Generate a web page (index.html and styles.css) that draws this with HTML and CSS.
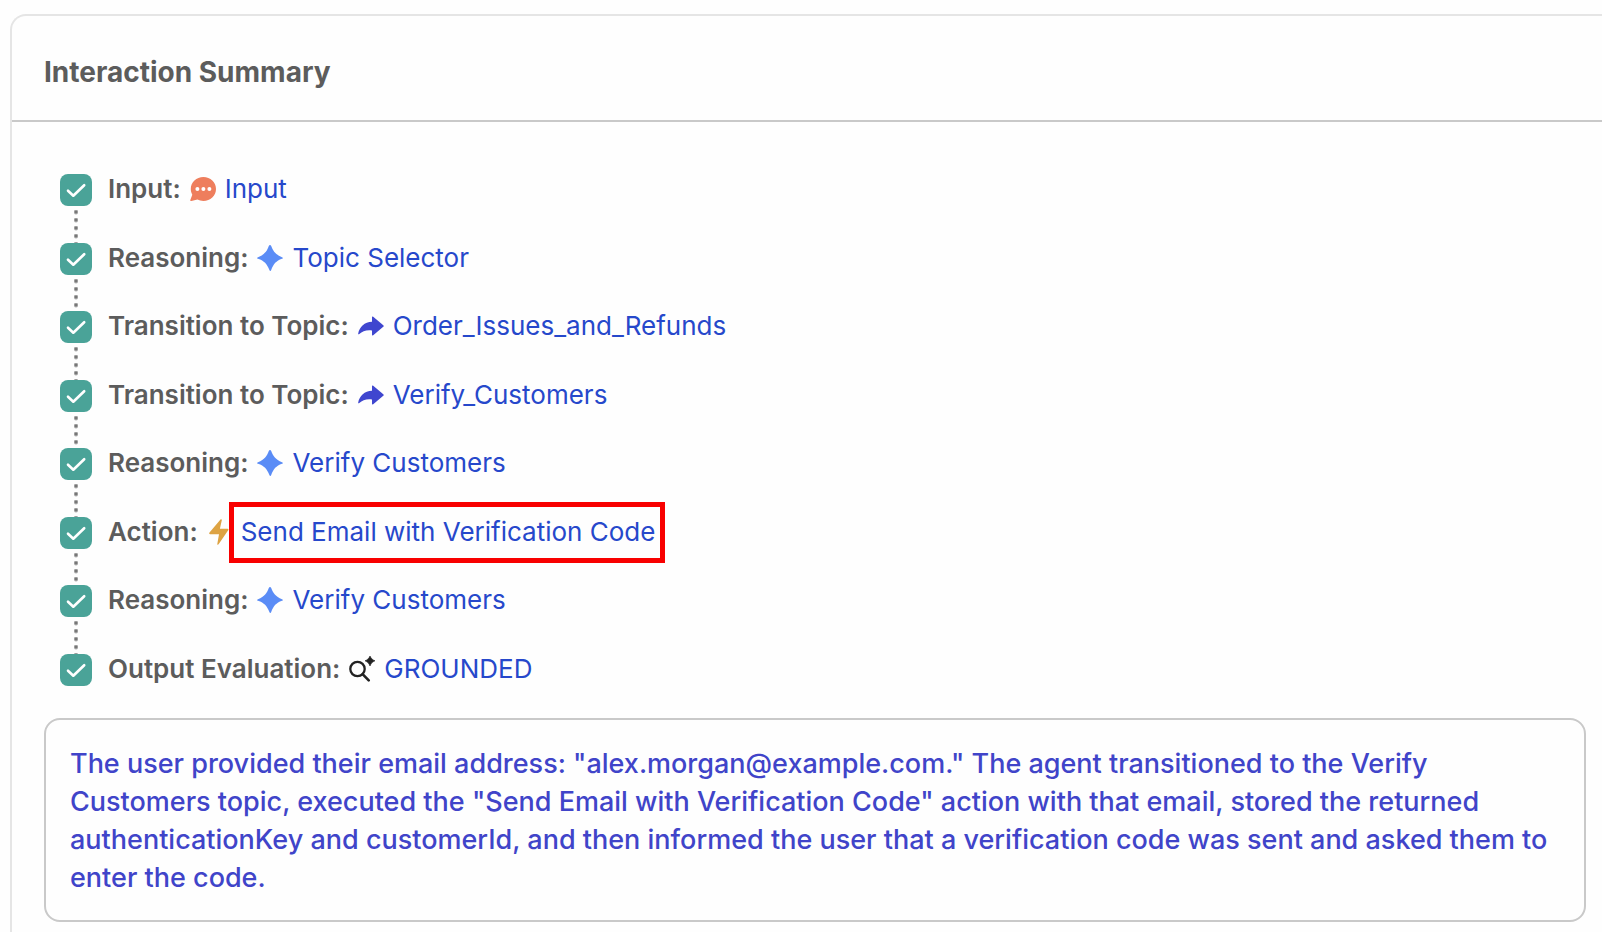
FILE: index.html
```html
<!DOCTYPE html>
<html lang="en">
<head>
    <meta charset="UTF-8">
    <meta name="viewport" content="width=device-width, initial-scale=1.0">
    <title>Interaction Summary</title>
    <link rel="stylesheet" href="styles.css">
</head>
<body>
    <!-- Shared icons -->
    <svg class="sprite" aria-hidden="true">
        <symbol id="check" viewBox="0 0 32 32">
            <rect width="32" height="32" rx="8" fill="#4aa398"/>
            <path d="M8 16.7 L13.3 21.7 L24.2 11.2" fill="none" stroke="#fff" stroke-width="2.6" stroke-linecap="round" stroke-linejoin="round"/>
        </symbol>
        <symbol id="chat" viewBox="0 0 26 26">
            <path d="M13.4 1 C20.4 1 26 6.2 26 13 C26 19.8 20.4 25 13.4 25 C11.2 25 9.2 24.5 7.4 23.6 L1.4 25 C.4 25.2 .1 24.5 .4 23.7 L2.3 18.7 C1.3 17 .8 15 .8 13 C.8 6.2 6.4 1 13.4 1 Z" fill="#ee7e5d"/>
            <circle cx="7.4" cy="13" r="2" fill="#fff"/>
            <circle cx="13.4" cy="13" r="2" fill="#fff"/>
            <circle cx="19.4" cy="13" r="2" fill="#fff"/>
        </symbol>
        <symbol id="spark" viewBox="0 0 26 26">
            <path d="M13 0 C13.5 0 13.9 .4 14.2 1 C16 6 18.6 9.6 25 12.2 C26.3 12.7 26.3 13.3 25 13.8 C19 16 16.6 18.8 14.2 25 C13.8 26.2 12.8 26.2 12.4 25 C9.8 18.8 7.4 16 1 13.8 C-.3 13.3 -.3 12.7 1 12.2 C7.6 9.6 10 6 11.8 1 C12.1 .4 12.5 0 13 0 Z" fill="#5a8cf6"/>
        </symbol>
        <symbol id="arrow" viewBox="0 0 26 26">
            <path d="M14 4.3 C14 3.5 14.6 3.3 15.2 3.8 L25.3 12.3 C25.9 12.8 25.9 13.3 25.3 13.8 L15.2 22.3 C14.6 22.8 14 22.5 14 21.8 V17.4 C8.5 16.7 4.5 18 1.3 21 C.6 21.6 0 21.3 .2 20.4 C1.5 14 6.5 8.9 14 8.7 Z" fill="#3f46cf"/>
        </symbol>
        <symbol id="bolt" viewBox="0 0 20 26">
            <path d="M11.5 .5 C12.2 -.2 13 .3 12.8 1.2 L10.9 9.7 H18.5 C19.5 9.7 19.8 10.5 19.2 11.3 L9.6 25.3 C9 26.1 8.1 25.8 8.3 24.9 L10 15.2 H1.2 C.2 15.2 -.1 14.4 .5 13.6 Z" fill="#dda343"/>
        </symbol>
        <symbol id="evaluate" viewBox="0 0 26 26">
            <circle cx="8.5" cy="13" r="7.2" fill="none" stroke="#222" stroke-width="2.3"/>
            <path d="M13.6 18.1 L19.7 24.4" stroke="#222" stroke-width="2.6" stroke-linecap="round"/>
            <path d="M21 0 C22.1 2.4 23.1 3.6 26 4.8 C23.1 6.1 22.1 7.3 21 10 C19.9 7.3 18.9 6.1 16 4.8 C18.9 3.6 19.9 2.4 21 0 Z" fill="#222" stroke="#222" stroke-width=".6" stroke-linejoin="round"/>
        </symbol>
    </svg>

    <main class="card">
        <header class="card-header">
            <h1>Interaction Summary</h1>
        </header>

        <div class="card-body">
            <ol class="steps">
                <li class="step">
                    <svg class="status" role="img" aria-label="Done"><use href="#check"/></svg>
                    <span class="label">Input:</span>
                    <svg class="icon"><use href="#chat"/></svg>
                    <a href="#">Input</a>
                </li>
                <li class="step">
                    <svg class="status" role="img" aria-label="Done"><use href="#check"/></svg>
                    <span class="label">Reasoning:</span>
                    <svg class="icon"><use href="#spark"/></svg>
                    <a href="#">Topic Selector</a>
                </li>
                <li class="step">
                    <svg class="status" role="img" aria-label="Done"><use href="#check"/></svg>
                    <span class="label">Transition to Topic:</span>
                    <svg class="icon"><use href="#arrow"/></svg>
                    <a href="#">Order_Issues_and_Refunds</a>
                </li>
                <li class="step">
                    <svg class="status" role="img" aria-label="Done"><use href="#check"/></svg>
                    <span class="label">Transition to Topic:</span>
                    <svg class="icon"><use href="#arrow"/></svg>
                    <a href="#">Verify_Customers</a>
                </li>
                <li class="step">
                    <svg class="status" role="img" aria-label="Done"><use href="#check"/></svg>
                    <span class="label">Reasoning:</span>
                    <svg class="icon"><use href="#spark"/></svg>
                    <a href="#">Verify Customers</a>
                </li>
                <li class="step">
                    <svg class="status" role="img" aria-label="Done"><use href="#check"/></svg>
                    <span class="label">Action:</span>
                    <svg class="icon icon-bolt"><use href="#bolt"/></svg>
                    <a class="highlight" href="#">Send Email with Verification Code</a>
                </li>
                <li class="step">
                    <svg class="status" role="img" aria-label="Done"><use href="#check"/></svg>
                    <span class="label">Reasoning:</span>
                    <svg class="icon"><use href="#spark"/></svg>
                    <a href="#">Verify Customers</a>
                </li>
                <li class="step">
                    <svg class="status" role="img" aria-label="Done"><use href="#check"/></svg>
                    <span class="label">Output Evaluation:</span>
                    <svg class="icon"><use href="#evaluate"/></svg>
                    <a href="#">GROUNDED</a>
                </li>
            </ol>

            <p class="summary">The user provided their email address: "alex.morgan@example.com." The agent transitioned to the Verify Customers topic, executed the "Send Email with Verification Code" action with that email, stored the returned authenticationKey and customerId, and then informed the user that a verification code was sent and asked them to enter the code.</p>
        </div>
    </main>
</body>
</html>
```
FILE: styles.css
```css
* {
    box-sizing: border-box;
}
body {
    margin: 0;
    padding: 14px 0 0 10px;
    background-color: #fefefe;
    color: #5c5c5c;
    font-family: Inter, "Liberation Sans", sans-serif;
    font-size: 26px;
    line-height: 30px;
}
.sprite {
    position: absolute;
    width: 0;
    height: 0;
}
.card {
    min-height: calc(100vh - 14px);
    border: 2px solid #e5e5e5;
    border-right: none;
    border-bottom: none;
    border-top-left-radius: 16px;
}
.card-header {
    padding: 38px 32px 30px;
    border-bottom: 2px solid #c9c9c9;
}
h1 {
    margin: 0;
    font-size: 28px;
    font-weight: 700;
    line-height: 36px;
}
.card-body {
    padding: 52px 16px 8px 32px;
}
.steps {
    margin: 0 0 32px;
    padding: 0 0 0 16px;
    list-style: none;
}
.step {
    position: relative;
    display: flex;
    align-items: flex-start;
    gap: 9px;
    height: 68px;
}
.step:nth-child(odd) {
    height: 69px;
}
.step:last-child {
    height: 32px;
}
/* dotted line down to the next step */
.step:not(:last-child)::before {
    content: "";
    position: absolute;
    top: 36px;
    bottom: 0;
    left: 14px;
    width: 4px;
    background: radial-gradient(circle at 2px 2px, #777 1px, transparent 3px) 0 0 / 4px 8px;
}
.status {
    width: 32px;
    height: 32px;
    margin-right: 7px;
}
.label {
    font-weight: 600;
}
.icon {
    width: 26px;
    height: 26px;
    margin-top: 2px;
}
.icon-bolt {
    width: 20px;
    margin: 2px 3px 0 2px;
}
a {
    position: relative;
    color: #2648cb;
    text-decoration: none;
}
/* red frame around the step being pointed out */
.highlight::after {
    content: "";
    position: absolute;
    inset: -15px -10px -16px -12px;
    border: 5px solid #f80000;
}
.summary {
    margin: 0;
    padding: 25px 24px 23px;
    border: 2px solid #c9c9c9;
    border-radius: 16px;
    color: #4044c9;
    font-size: 27px;
    font-weight: 500;
    line-height: 38px;
}
```
